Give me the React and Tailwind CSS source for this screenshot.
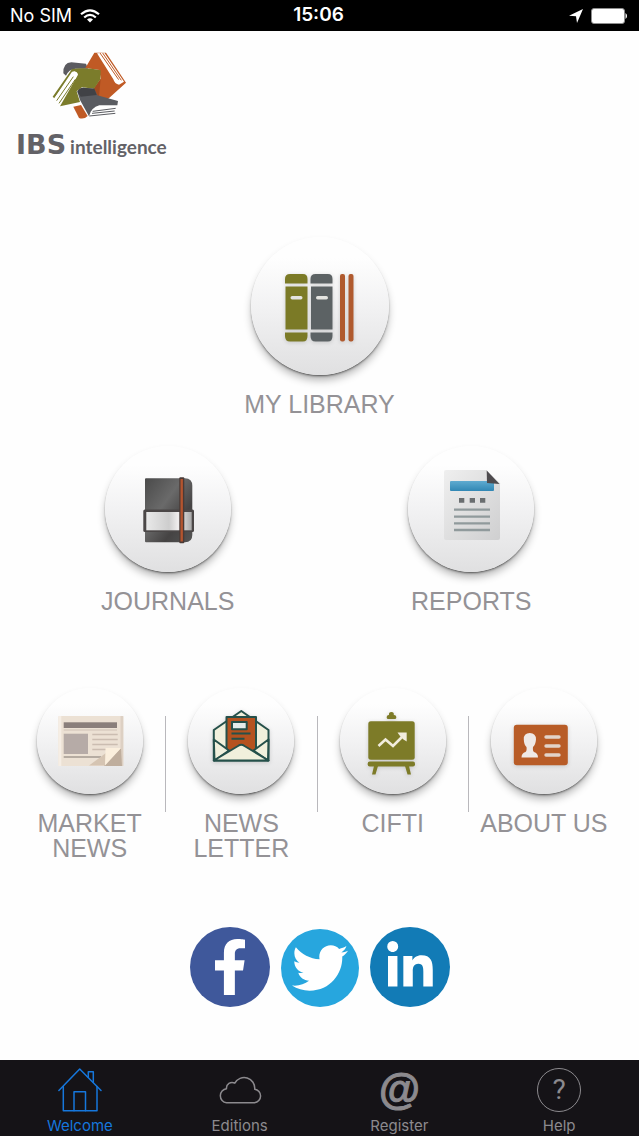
import { FaFacebookF, FaTwitter, FaLinkedinIn } from 'react-icons/fa'

function BrandMark() {
  return (
    <svg viewBox="150 155 240 210" className="w-20 h-[70px]" aria-hidden="true">
      <path d="M190 222 Q189 190 214 189 L258 193 L264 208 L226 208 Q206 210 198 229 Z" fill="#5b5b60" />
      <path d="M283 160 L318 160 L378 250 L314 308 L296 302 L272 280 L302 238 L298 212 L256 206 Z" fill="#c05a25" />
      <path d="M291 162 L313 160 L372 247 L357 256 Q344 254 340 240 Z" fill="#fff" />
      <path d="M300 161 L356 241 M308 161 L364 243" stroke="#c05a25" strokeWidth="3" fill="none" />
      <path d="M302 238 L272 280 L296 302 Z" fill="#a34a1f" />
      <path d="M216 209 Q260 203 302 213 L301 240 L282 268 L246 264 L230 276 L240 308 L180 321 L234 226 Q232 214 216 217 L163 297 L158 292 Z" fill="#7b7c2b" />
      <path d="M222 216 Q236 220 229 233 L178 318 L163 297 Z" fill="#fff" />
      <path d="M220 232 L170 304 M226 240 L177 312" stroke="#7b7c2b" strokeWidth="3" fill="none" />
      <path d="M232 277 Q238 265 250 265 L283 268 L292 288 L354 305 L352 318 L298 318 Q273 325 267 351 L240 302 Z" fill="#5a5c61" />
      <path d="M232 277 Q238 265 250 265 L283 268 L290 287 L242 292 Z" fill="#414246" />
      <path d="M274 336 Q284 322 302 321 L350 321 L345 341 L272 347 Z" fill="#fff" />
      <path d="M278 336 L347 327 M276 342 L344 335 M268 350 L346 342" stroke="#5a5c61" strokeWidth="3" fill="none" />
      <path d="M220 322 L243 317 L263 350 Q252 361 237 356 Z" fill="#c05a25" />
    </svg>
  )
}

function LibraryIcon() {
  return (
    <svg viewBox="0 0 138 138" className="size-full drop-shadow-sm" aria-hidden="true">
      <g fill="#7b7a26">
        <path d="M34 46.5 V42 Q34 37 39 37 H52 Q56.5 37 56.5 42 V46.5 Z" />
        <rect x="34.5" y="49.5" width="22" height="43" />
        <path d="M34 95.5 H56.5 V99 Q56.5 104.5 52 104.5 H39 Q34 104.5 34 99 Z" />
      </g>
      <g fill="#5c6264">
        <path d="M59.5 46.5 V42 Q59.5 37 64.5 37 H77 Q81.5 37 81.5 42 V46.5 Z" />
        <rect x="60" y="49.5" width="21.5" height="43" />
        <path d="M59.5 95.5 H81.5 V99 Q81.5 104.5 77 104.5 H64.5 Q59.5 104.5 59.5 99 Z" />
      </g>
      <rect x="39.5" y="59" width="12" height="3.5" rx="1.7" fill="#e4e4e0" />
      <rect x="65" y="59" width="12" height="3.5" rx="1.7" fill="#e4e4e0" />
      <rect x="89" y="37" width="5" height="67.5" rx="2" fill="#b05a2e" />
      <rect x="97.5" y="37" width="5" height="67.5" rx="2" fill="#b05a2e" />
    </svg>
  )
}

function JournalIcon() {
  return (
    <svg viewBox="0 0 126 126" className="size-full" aria-hidden="true">
      <defs>
        <linearGradient id="cover" x1="0" y1="0" x2="1" y2="1">
          <stop offset="0" stopColor="#4a4a4a" />
          <stop offset=".4" stopColor="#6a6a6a" />
          <stop offset=".7" stopColor="#454343" />
          <stop offset="1" stopColor="#555" />
        </linearGradient>
        <linearGradient id="band" x1="0" y1="0" x2="1" y2="0">
          <stop offset="0" stopColor="#e9e9e9" />
          <stop offset=".5" stopColor="#cdcdcd" />
          <stop offset=".7" stopColor="#f0eeee" />
          <stop offset="1" stopColor="#a9a9a9" />
        </linearGradient>
      </defs>
      <path d="M41 32.3 H80 Q87.3 32.3 87.3 40 V89 Q87.3 96.3 80 96.3 H41 Q40 96.3 40 95.3 V33.3 Q40 32.3 41 32.3 Z" fill="url(#cover)" />
      <rect x="38.3" y="63.5" width="50.7" height="22.5" rx="1.5" fill="#4b4747" />
      <rect x="41.3" y="66" width="45.4" height="18.3" fill="url(#band)" />
      <rect x="74.3" y="31.3" width="5" height="66" rx="1" fill="#4a3a36" />
      <rect x="75.5" y="33" width="2.4" height="62.5" fill="#b4552f" />
    </svg>
  )
}

function ReportIcon() {
  return (
    <svg viewBox="0 0 126 126" className="size-full" aria-hidden="true">
      <defs>
        <linearGradient id="paper" x1="0" y1="0" x2="1" y2="1">
          <stop offset="0" stopColor="#efefef" />
          <stop offset="1" stopColor="#cfcfd0" />
        </linearGradient>
        <linearGradient id="title" x1="0" y1="0" x2="0" y2="1">
          <stop offset="0" stopColor="#5fabd0" />
          <stop offset="1" stopColor="#3187b4" />
        </linearGradient>
      </defs>
      <path d="M38 24 H78.5 L92 37.5 V92 Q92 94 90 94 H38 Q36 94 36 92 V26 Q36 24 38 24 Z" fill="url(#paper)" />
      <rect x="42" y="35" width="44" height="10" rx="1" fill="url(#title)" />
      <path d="M78.7 24.5 L91.5 38 L79 37 Z" fill="#4e4b4e" />
      <path d="M51 52 h5.3 v4.8 h-5.3 Z M61.7 52 h5.3 v4.8 h-5.3 Z M72 52 h5.3 v4.8 h-5.3 Z" fill="#6a6e70" />
      <path d="M46 63.7 H82 M46 70.7 H82 M46 77.3 H82 M46 84 H82" stroke="#909a9c" strokeWidth="2.3" />
    </svg>
  )
}

function NewspaperIcon() {
  return (
    <svg viewBox="0 0 106 106" className="size-full" aria-hidden="true">
      <rect x="21.3" y="28" width="65" height="50" rx="1" fill="#ece1d4" />
      <rect x="21.3" y="28" width="3" height="50" fill="#f6eee5" />
      <rect x="83.5" y="28" width="2.8" height="50" fill="#ddd0c3" />
      <rect x="26.7" y="34.3" width="53.3" height="5.7" fill="#8a7f7b" />
      <path d="M26.7 42 H80" stroke="#cfc2b6" strokeWidth="1" />
      <rect x="26.7" y="45.7" width="24.3" height="20.3" fill="#b6aba7" />
      <path d="M55.3 46.5 H80.7 M55.3 51.5 H80.7 M55.3 56.5 H80.7 M55.3 61.5 H70" stroke="#cbbdb1" strokeWidth="1.5" />
      <path d="M26.7 69 H64" stroke="#a39891" strokeWidth="1.5" />
      <path d="M52 77.5 L69 65 V77.5 Z" fill="#d5c4b2" />
      <path d="M84 60 L85 78 H67 Z" fill="#bfae9d" />
      <path d="M68.5 60 H84 L68 77.5 Z" fill="#fbefdd" />
    </svg>
  )
}

function NewsletterIcon() {
  return (
    <svg viewBox="0 0 106 106" className="size-full drop-shadow-sm" aria-hidden="true">
      <g stroke="#25504a" strokeWidth="2" strokeLinejoin="round">
        <path d="M25.8 42 L53.3 23 L80.5 42 V72.5 H25.8 Z" fill="#f1f0dc" />
        <path d="M38.5 70 V29 H68 V70 Z" fill="#b5521f" />
        <path d="M44 34 H58.7 V41.3 H44 Z" fill="#e4ecea" />
        <path d="M43.5 45.6 H62.5 M43.5 50.8 H56.5" />
        <path d="M25.8 51.5 L41 62.5 L26.5 72.5 Z M80.5 51.5 L65.5 62.5 L80 72.5 Z" fill="#f1f0dc" />
        <path d="M25.8 72.5 L50 58 Q53.3 55.5 56.5 58 L80.5 72.5 Z" fill="#f1f0dc" />
      </g>
    </svg>
  )
}

function EaselIcon() {
  return (
    <svg viewBox="0 0 106 106" className="size-full drop-shadow-sm" aria-hidden="true">
      <g fill="#7d7b28">
        <path d="M48 31 Q46 30.5 47 28 Q47.5 27 49 27 Q48.5 24 51.4 24 Q54.3 24 53.8 27 Q55.5 27 56 28 Q57 30.5 55 31 Z" />
        <rect x="28.3" y="33.3" width="46.4" height="38.5" rx="2.5" />
        <rect x="27.7" y="73.5" width="47.3" height="5" rx="2" />
        <path d="M34 78 H38 L35.5 86.5 H32 Z M65 78 H69 L71 86.5 H67.5 Z" />
      </g>
      <path d="M38.5 58 L45.5 51.5 L53 58 L62.5 48.5" stroke="#f1ecdd" strokeWidth="2.6" fill="none" />
      <path d="M57.5 44.5 H66.7 V53.5 L63.5 51.5 L60 48 Z" fill="#f1ecdd" />
    </svg>
  )
}

function ContactCardIcon() {
  return (
    <svg viewBox="0 0 106 106" className="size-full drop-shadow-sm" aria-hidden="true">
      <rect x="22.8" y="36.7" width="54" height="40.6" rx="3" fill="#b85c27" />
      <path d="M38.8 45 Q45 45 45 51.5 Q44.5 57 42 59 Q41.5 63 43 64 Q47 65 47 69.5 H30.5 Q30.5 65 34.5 64 Q36 63 35.5 59 Q33 57 32.8 51.5 Q32.5 45 38.8 45 Z" fill="#efe9e6" />
      <path d="M55 49 H68 M55 58 H68 M55 67 H68" stroke="#e2d3ca" strokeWidth="3.4" strokeLinecap="round" />
    </svg>
  )
}

function HomeIcon() {
  return (
    <svg viewBox="0 0 44 44" className="size-11" fill="none" stroke="currentColor" strokeWidth="1.5" strokeLinejoin="round" strokeLinecap="round" aria-hidden="true">
      <path d="M.9 22.5 L21.7 1 L43 22.5" />
      <path d="M5.3 18.5 V42.7 H39 V18.5" />
      <path d="M16 42.7 V23.7 H27.5 V42.7" />
      <path d="M30.3 9.5 V3.7 H35.3 V14.5" />
    </svg>
  )
}

function CloudIcon() {
  return (
    <svg viewBox="0 0 44 44" className="size-11" fill="none" stroke="currentColor" strokeWidth="1.5" strokeLinejoin="round" aria-hidden="true">
      <path d="M8.5 34.7 H36.5 A6.8 6.8 0 0 0 36.7 21.2 A10.6 10.6 0 0 0 16.8 15.2 A5.6 5.6 0 0 0 8.5 20.8 A7 7 0 0 0 8.5 34.7 Z" />
    </svg>
  )
}

const FEATURES = [
  { id: 'journals', label: 'JOURNALS', Icon: JournalIcon },
  { id: 'reports', label: 'REPORTS', Icon: ReportIcon },
]

const SECTIONS = [
  { id: 'market-news', label: 'MARKET NEWS', Icon: NewspaperIcon },
  { id: 'news-letter', label: 'NEWS LETTER', Icon: NewsletterIcon },
  { id: 'cifti', label: 'CIFTI', Icon: EaselIcon },
  { id: 'about', label: 'ABOUT US', Icon: ContactCardIcon },
]

const TABS = [
  { id: 'welcome', label: 'Welcome', icon: <HomeIcon /> },
  { id: 'editions', label: 'Editions', icon: <CloudIcon /> },
  {
    id: 'register',
    label: 'Register',
    icon: (
      <span aria-hidden="true" className="font-['Liberation_Sans'] text-[42px] leading-[44px] font-bold [-webkit-text-stroke:1px_currentColor]">
        @
      </span>
    ),
  },
  {
    id: 'help',
    label: 'Help',
    icon: (
      <span aria-hidden="true" className="flex size-11 items-center justify-center rounded-full border border-current font-['Roboto'] text-[28px]">
        ?
      </span>
    ),
  },
]

const DISC_SIZES = {
  lg: 'size-[138px]',
  md: 'size-[126px]',
  sm: 'size-[106px]',
}

function Tile({ id, label, Icon, size }) {
  return (
    <a href={`#${id}`} className="flex flex-col items-center gap-[17px] text-center text-[25px] leading-[25px] text-[#949296]">
      <span
        className={`${DISC_SIZES[size]} block shrink-0 rounded-full bg-linear-to-b from-[#fefefe] from-15% via-[#f2f2f3] via-50% to-[#e0e0e1] shadow-[0_2px_2px_-1px_#555,0_2px_2px_#bbb,0_6px_9px_-1px_#0000004d]`}
      >
        <Icon />
      </span>
      {label}
    </a>
  )
}

function StatusBar() {
  return (
    <div className="grid h-[31px] shrink-0 grid-cols-3 items-center bg-black pr-3 pl-2.5 font-['Inter',sans-serif] text-white">
      <div className="flex items-center gap-2 text-lg">
        No SIM
        <svg viewBox="0 0 20 14" className="h-3.5 w-5" fill="none" stroke="#fff" strokeWidth="2.2" aria-label="Wi-Fi">
          <path d="M1 5.3 Q10 -2.7 19 5.3" />
          <path d="M4.2 8.5 Q10 3.3 15.8 8.5" />
          <path d="M10 13.5 L7 10.5 Q10 8 13 10.5 Z" fill="#fff" stroke="none" />
        </svg>
      </div>
      <div className="text-center text-[19px] font-semibold">15:06</div>
      <div className="flex items-center justify-end gap-2">
        <svg viewBox="0 0 14 14" className="size-3.5" aria-hidden="true">
          <path d="M14 0 L0 6.8 L7 7.3 L8 14 Z" fill="#fff" />
        </svg>
        <svg viewBox="0 0 36 16" className="h-4 w-9" aria-label="Battery">
          <rect x=".5" y=".5" width="33" height="15" rx="2.5" fill="#fff" stroke="#8d8d8d" />
          <path d="M34.5 5 Q36 6 36 8 Q36 10 34.5 11 Z" fill="#fff" />
        </svg>
      </div>
    </div>
  )
}

export default function App() {
  return (
    <div className="flex min-h-screen flex-col bg-[#fefefe] font-['Liberation_Sans',Arial,sans-serif]">
      <StatusBar />

      <main className="flex flex-1 flex-col">
        <header className="flex h-[206px] flex-col px-4 pt-5">
          <div className="px-[34px]">
            <BrandMark />
          </div>
          <h1 className="mt-2 flex items-baseline gap-1 text-[#636267]">
            <span className="font-['DejaVu_Sans'] text-[27px] leading-8 font-bold">IBS</span>
            <span className="font-['Lato'] text-[19px] leading-8 font-bold">intelligence</span>
          </h1>
        </header>

        <div className="flex justify-center">
          <Tile id="library" label="MY LIBRARY" Icon={LibraryIcon} size="lg" />
        </div>

        <div className="mt-[29px] grid grid-cols-2 px-4">
          {FEATURES.map(item => (
            <Tile key={item.id} {...item} size="md" />
          ))}
        </div>

        {/* Sections, with a rule between neighbours */}
        <ul className="mt-[74px] flex pr-5 pl-3.5">
          {SECTIONS.map((item, i) => (
            <li key={item.id} className="flex flex-1 basis-0">
              {i > 0 && <span className="mt-7 h-24 w-px shrink-0 bg-[#b9b8bc]" />}
              <div className="flex-1 px-2">
                <Tile {...item} size="sm" />
              </div>
            </li>
          ))}
        </ul>

        <div className="mt-[66px] mb-[52px] flex items-end justify-center gap-[11px] text-white">
          <a href="#facebook" aria-label="Facebook" className="flex size-20 items-center justify-center rounded-full bg-[#3f589b]">
            <FaFacebookF className="size-14" />
          </a>
          <a href="#twitter" aria-label="Twitter" className="flex size-[78px] items-center justify-center rounded-full bg-[#27a6de]">
            <FaTwitter className="size-14" />
          </a>
          <a href="#linkedin" aria-label="LinkedIn" className="flex size-20 items-center justify-center rounded-full bg-[#127bb6]">
            <FaLinkedinIn className="size-[52px]" />
          </a>
        </div>
      </main>

      <nav className="grid h-19 shrink-0 grid-cols-4 bg-[#151317] font-['Inter',sans-serif] text-[15px] leading-5">
        {TABS.map(tab => (
          <a
            key={tab.id}
            href={`#${tab.id}`}
            className={`flex flex-col items-center gap-1 pt-2 ${tab.id === 'welcome' ? 'text-[#1677dc]' : 'text-[#8c8a8e]'}`}
          >
            {tab.icon}
            {tab.label}
          </a>
        ))}
      </nav>
    </div>
  )
}
